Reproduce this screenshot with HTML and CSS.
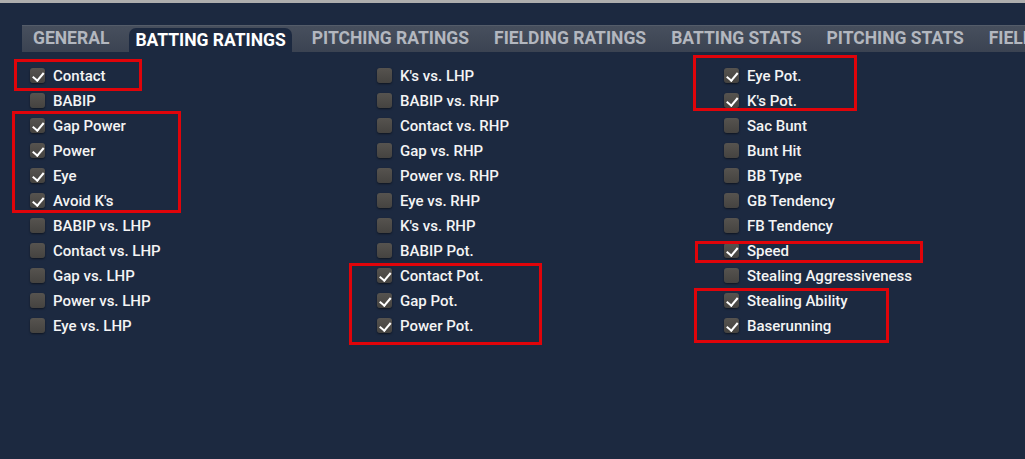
FILE: index.html
```html
<!DOCTYPE html>
<html lang="en">
<head>
  <meta charset="UTF-8">
  <title>Batting Ratings</title>
  <link rel="stylesheet" href="styles.css">
</head>
<body>
  <div class="topstrip"></div>
  <div class="page">
    <!-- tab bar -->
    <div class="tabs">
      <div class="tab">GENERAL</div>
      <div class="tab active">BATTING RATINGS</div>
      <div class="tab">PITCHING RATINGS</div>
      <div class="tab">FIELDING RATINGS</div>
      <div class="tab">BATTING STATS</div>
      <div class="tab">PITCHING STATS</div>
      <div class="tab">FIELDING STATS</div>
    </div>

    <!-- option columns -->
    <div class="options">
      <div class="col">
        <label class="opt on"><span class="box"></span>Contact</label>
        <label class="opt"><span class="box"></span>BABIP</label>
        <label class="opt on"><span class="box"></span>Gap Power</label>
        <label class="opt on"><span class="box"></span>Power</label>
        <label class="opt on"><span class="box"></span>Eye</label>
        <label class="opt on"><span class="box"></span>Avoid K's</label>
        <label class="opt"><span class="box"></span>BABIP vs. LHP</label>
        <label class="opt"><span class="box"></span>Contact vs. LHP</label>
        <label class="opt"><span class="box"></span>Gap vs. LHP</label>
        <label class="opt"><span class="box"></span>Power vs. LHP</label>
        <label class="opt"><span class="box"></span>Eye vs. LHP</label>
      </div>
      <div class="col">
        <label class="opt"><span class="box"></span>K's vs. LHP</label>
        <label class="opt"><span class="box"></span>BABIP vs. RHP</label>
        <label class="opt"><span class="box"></span>Contact vs. RHP</label>
        <label class="opt"><span class="box"></span>Gap vs. RHP</label>
        <label class="opt"><span class="box"></span>Power vs. RHP</label>
        <label class="opt"><span class="box"></span>Eye vs. RHP</label>
        <label class="opt"><span class="box"></span>K's vs. RHP</label>
        <label class="opt"><span class="box"></span>BABIP Pot.</label>
        <label class="opt on"><span class="box"></span>Contact Pot.</label>
        <label class="opt on"><span class="box"></span>Gap Pot.</label>
        <label class="opt on"><span class="box"></span>Power Pot.</label>
      </div>
      <div class="col">
        <label class="opt on"><span class="box"></span>Eye Pot.</label>
        <label class="opt on"><span class="box"></span>K's Pot.</label>
        <label class="opt"><span class="box"></span>Sac Bunt</label>
        <label class="opt"><span class="box"></span>Bunt Hit</label>
        <label class="opt"><span class="box"></span>BB Type</label>
        <label class="opt"><span class="box"></span>GB Tendency</label>
        <label class="opt"><span class="box"></span>FB Tendency</label>
        <label class="opt on"><span class="box"></span>Speed</label>
        <label class="opt"><span class="box"></span>Stealing Aggressiveness</label>
        <label class="opt on"><span class="box"></span>Stealing Ability</label>
        <label class="opt on"><span class="box"></span>Baserunning</label>
      </div>
    </div>

    <!-- red annotation boxes drawn over the list -->
    <div class="mark" style="left:14px; top:56px; width:128px; height:32px"></div>
    <div class="mark" style="left:12px; top:108px; width:169px; height:102px"></div>
    <div class="mark" style="left:349px; top:260px; width:193px; height:82px"></div>
    <div class="mark" style="left:693px; top:52px; width:164px; height:56px"></div>
    <div class="mark" style="left:695px; top:238px; width:228px; height:22px"></div>
    <div class="mark" style="left:694px; top:285px; width:195px; height:55px"></div>
  </div>
</body>
</html>
```

FILE: styles.css
```css
* { box-sizing: border-box; margin: 0; padding: 0; }
html, body { height: 100%; }
body {
  background: #1c2940;
  color: #f2f2f2;
  font-family: Roboto, "Liberation Sans", sans-serif;
  overflow: hidden;
}
.topstrip { height: 3px; background: #aeaeae; }
.page { position: relative; padding-top: 22px; }

/* Tabs */
.tabs {
  display: flex; align-items: flex-end;
  margin-left: 22px; height: 27px;
  background: linear-gradient(#474f5d, #3b4352);
  border-top: 1px solid #545c69;
  white-space: nowrap; overflow: hidden;
}
.tab {
  flex: none;
  padding: 0 12.5px 7px;
  font-size: 17.5px; font-weight: 700;
  color: #b3b7bf;
  line-height: 14px;
}
.tab:first-child { padding-left: 11px; }
.tab.active {
  background: #1c2940; color: #fff;
  border-radius: 7px 7px 0 0;
  margin: 0 7.5px;
  padding: 5px 6px 5px;
  height: 24px;
}

/* Options grid */
.options {
  display: grid;
  grid-template-columns: 347px 347px 1fr;
  padding: 11px 0 0 30px;
}
.col { display: flex; flex-direction: column; }
.opt {
  display: flex; align-items: center; gap: 8px;
  height: 25px;
  font-size: 15px; font-weight: 500;
  color: #f4f4f4;
}
.box {
  width: 15px; height: 15px; flex: none;
  border-radius: 3px;
  background: linear-gradient(#56534f, #454340);
  box-shadow: 0 1px 2px rgba(0,0,0,0.5);
  position: relative;
}
.opt.on .box::after {
  content: "";
  position: absolute; left: 5px; top: 2px;
  width: 4.5px; height: 8.5px;
  border: solid #fff; border-width: 0 2.2px 2.2px 0;
  transform: rotate(40deg);
}

/* Red highlight frames */
.mark {
  position: absolute;
  border: 3px solid #e0040a;
}
```
